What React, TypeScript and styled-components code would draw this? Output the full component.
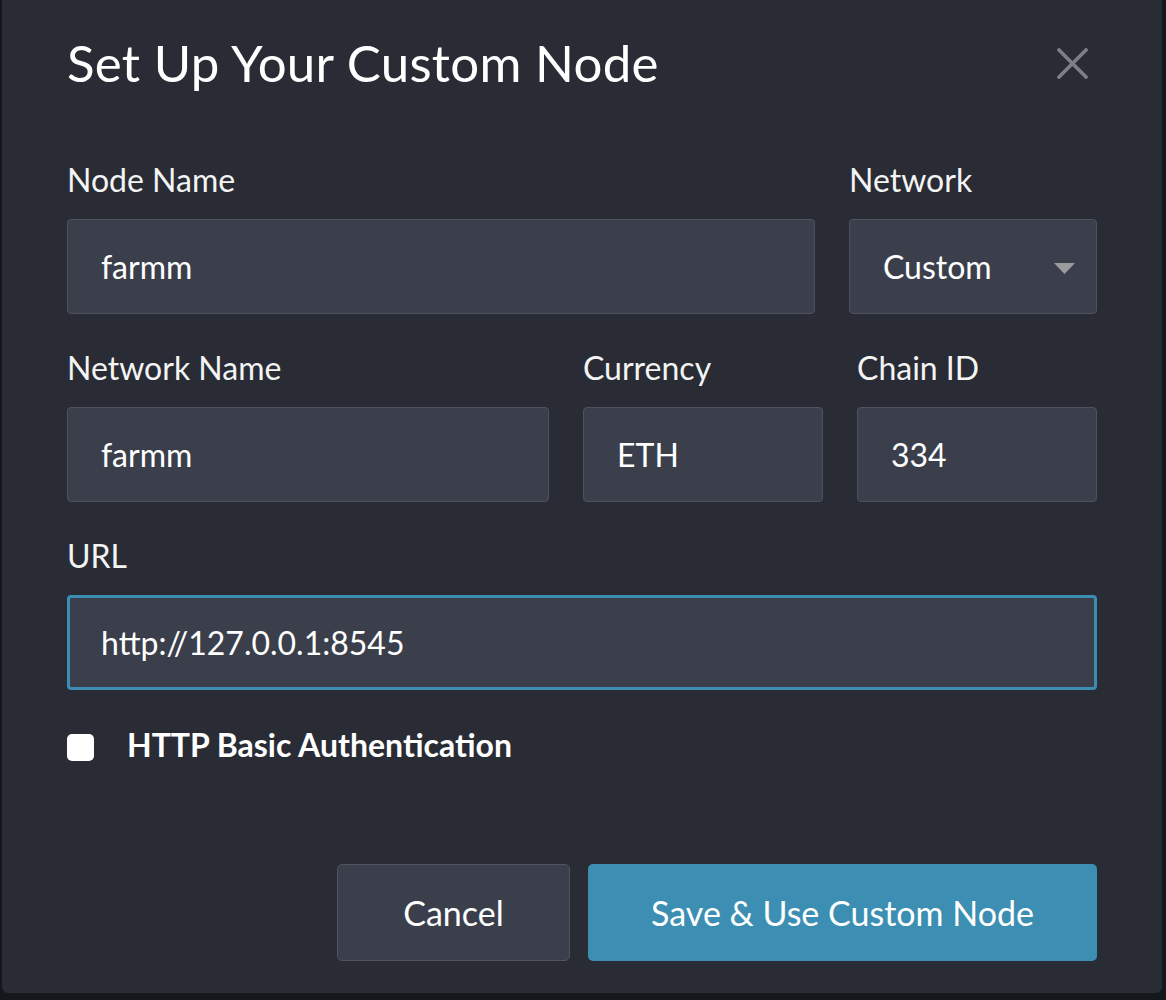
import React from "react";
import styled, { createGlobalStyle } from "styled-components";

const GlobalStyle = createGlobalStyle`
  html, body {
    margin: 0;
    padding: 0;
    background: #14171c;
  }
  body {
    font-family: Lato, "Open Sans", sans-serif;
    color: #ffffff;
  }
`;

const Backdrop = styled.div`
  width: 1166px;
  height: 1000px;
  overflow: hidden;
  background: #14171c;
`;

const Modal = styled.div`
  margin-left: 2px;
  width: 1160px;
  height: 993px;
  box-sizing: border-box;
  padding: 33px 65px 32px;
  background: #292c35;
  border-radius: 0 0 6px 6px;
  display: flex;
  flex-direction: column;
`;

const Header = styled.div`
  display: flex;
  align-items: center;
  justify-content: space-between;
`;

const Title = styled.h1`
  margin: 0;
  font-size: 51px;
  line-height: 60px;
  font-weight: 400;
  letter-spacing: 0.3px;
  color: #ffffff;
`;

const CloseButton = styled.button`
  width: 50px;
  height: 50px;
  padding: 0;
  border: none;
  background: transparent;
  display: flex;
  align-items: center;
  justify-content: center;
  cursor: pointer;
`;

const Form = styled.div`
  display: flex;
  flex-direction: column;
  gap: 35px;
  margin-top: 68px;
`;

const Row = styled.div<{ $cols: string }>`
  display: grid;
  grid-template-columns: ${(p) => p.$cols};
  column-gap: 34px;
`;

const Field = styled.label`
  display: flex;
  flex-direction: column;
  gap: 20px;
`;

const Label = styled.span`
  font-size: 32px;
  line-height: 38px;
  color: #f4f4f4;
`;

const Input = styled.input<{ $focused?: boolean }>`
  box-sizing: border-box;
  width: 100%;
  height: 95px;
  padding: 0 ${(p) => (p.$focused ? 31 : 33)}px;
  font-family: Lato, sans-serif;
  font-size: 32px;
  color: #ffffff;
  background: #3b3f4c;
  border: ${(p) => (p.$focused ? "3px solid #3c8db2" : "1.5px solid #4e525f")};
  border-radius: 4px;
  outline: none;
`;

const Select = styled.div`
  position: relative;
  box-sizing: border-box;
  height: 95px;
  padding: 0 33px;
  display: flex;
  align-items: center;
  font-size: 32px;
  color: #ffffff;
  background: #3b3f4c;
  border: 1.5px solid #4e525f;
  border-radius: 4px;
`;

const Caret = styled.svg`
  position: absolute;
  right: 21px;
  top: 43px;
`;

const CheckRow = styled.label`
  display: flex;
  align-items: center;
  gap: 33px;
  margin-top: 1px;
`;

const CheckBox = styled.span`
  width: 27px;
  height: 27px;
  border-radius: 5px;
  background: #ffffff;
  margin-top: 4px;
`;

const CheckLabel = styled.span`
  font-size: 32px;
  line-height: 38px;
  font-weight: 700;
  color: #ffffff;
`;

const Footer = styled.div`
  margin-top: auto;
  display: flex;
  justify-content: flex-end;
  gap: 18px;
`;

const Button = styled.button<{ $primary?: boolean }>`
  box-sizing: border-box;
  height: 97px;
  width: ${(p) => (p.$primary ? "509px" : "233px")};
  font-family: Lato, sans-serif;
  font-size: 34px;
  color: #ffffff;
  background: ${(p) => (p.$primary ? "#3c8fb3" : "#3b3f4c")};
  border: ${(p) => (p.$primary ? "none" : "1.5px solid #50545f")};
  border-radius: 5px;
  cursor: pointer;
`;

export default function App() {
  return (
    <Backdrop>
      <GlobalStyle />
      <Modal>
        <Header>
          <Title>Set Up Your Custom Node</Title>
          <CloseButton aria-label="Close">
            <svg width="31" height="31" viewBox="0 0 31 31">
              <path
                d="M2 2 L29 29 M29 2 L2 29"
                stroke="#7e7f82"
                strokeWidth="3.6"
                strokeLinecap="square"
              />
            </svg>
          </CloseButton>
        </Header>
        <Form>
          <Row $cols="1fr 248px">
            <Field>
              <Label>Node Name</Label>
              <Input defaultValue="farmm" />
            </Field>
            <Field>
              <Label>Network</Label>
              <Select>
                Custom
                <Caret width="21" height="11" viewBox="0 0 21 11">
                  <path d="M0 0 H21 L10.5 11 Z" fill="#9b9c9f" />
                </Caret>
              </Select>
            </Field>
          </Row>
          <Row $cols="1fr 240px 240px">
            <Field>
              <Label>Network Name</Label>
              <Input defaultValue="farmm" />
            </Field>
            <Field>
              <Label>Currency</Label>
              <Input defaultValue="ETH" />
            </Field>
            <Field>
              <Label>Chain ID</Label>
              <Input defaultValue="334" />
            </Field>
          </Row>
          <Row $cols="1fr">
            <Field>
              <Label>URL</Label>
              <Input $focused defaultValue="http://127.0.0.1:8545" />
            </Field>
          </Row>
          <CheckRow>
            <CheckBox />
            <CheckLabel>HTTP Basic Authentication</CheckLabel>
          </CheckRow>
        </Form>
        <Footer>
          <Button>Cancel</Button>
          <Button $primary>Save &amp; Use Custom Node</Button>
        </Footer>
      </Modal>
    </Backdrop>
  );
}
